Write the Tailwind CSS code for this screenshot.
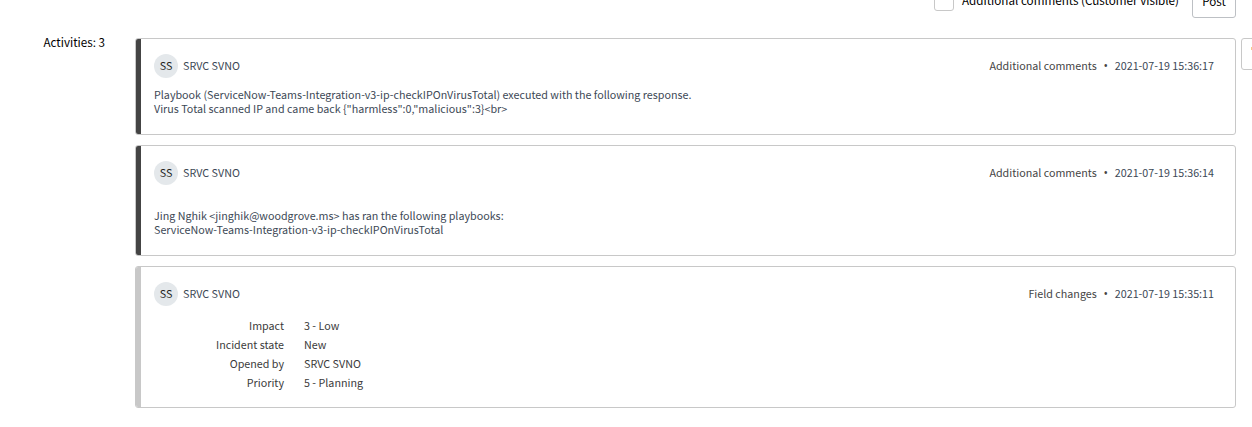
<!DOCTYPE html>
<html lang="en">
<head>
<meta charset="utf-8">
<title>Activities</title>
<script src="https://cdn.jsdelivr.net/npm/@tailwindcss/browser@4"></script>
</head>
<body class="h-[427px] w-[1252px] overflow-hidden bg-white font-['Noto_Sans_CJK_SC','Noto_Sans',sans-serif] text-[10.74px] leading-[14px] whitespace-nowrap text-[#3c4855]">
<header class="flex h-[38px] items-start justify-end overflow-hidden pr-4 text-[11.65px] text-black">
  <span class="-mt-2.5 h-[21px] w-5 rounded-[3px] border border-[#c8c8c8] bg-white"></span>
  <span class="-mt-[9px] ml-2 w-[218px] leading-[18px]">Additional comments (Customer visible)</span>
  <button class="-mt-4 ml-3 flex h-[34px] w-11 items-center justify-center rounded-[3px] border border-[#bdc0c4] leading-[18px]">Post</button>
</header>
<main class="flex items-start">
  <div class="w-[135px] shrink-0 pr-[30px] text-right text-[11.65px] leading-[7px] text-black">Activities: 3</div>
  <section class="flex w-[1101px] shrink-0 flex-col gap-2.5">
    <article class="flex h-[97px] overflow-hidden rounded-[3px] border border-[#c8c8c8]">
      <div class="w-[5px] bg-[#444]"></div>
      <div class="flex-1 pt-[15px] pr-[21px] pl-[13px]">
        <div class="flex h-6 items-center">
          <span class="flex size-6 items-center justify-center rounded-full bg-[#e4e8eb] text-[#222]">SS</span>
          <span class="ml-[5px]">SRVC SVNO</span>
          <span class="ml-auto text-[#444]">Additional comments</span>
          <span class="w-[18px] text-center font-['Open_Sans'] text-[12px] text-[#444]">•</span>
          <span>2021-07-19 15:36:17</span>
        </div>
        <p class="mt-[10px]">Playbook (ServiceNow-Teams-Integration-v3-ip-checkIPOnVirusTotal) executed with the following response.</p>
        <p>Virus Total scanned IP and came back {"harmless":0,"malicious":3}&lt;br&gt;</p>
      </div>
    </article>
    <article class="flex h-[111px] overflow-hidden rounded-[3px] border border-[#c8c8c8]">
      <div class="w-[5px] bg-[#444]"></div>
      <div class="flex-1 pt-[15px] pr-[21px] pl-[13px]">
        <div class="flex h-6 items-center">
          <span class="flex size-6 items-center justify-center rounded-full bg-[#e4e8eb] text-[#222]">SS</span>
          <span class="ml-[5px]">SRVC SVNO</span>
          <span class="ml-auto text-[#444]">Additional comments</span>
          <span class="w-[18px] text-center font-['Open_Sans'] text-[12px] text-[#444]">•</span>
          <span>2021-07-19 15:36:14</span>
        </div>
        <p class="mt-6">Jing Nghik &lt;jinghik@woodgrove.ms&gt; has ran the following playbooks:</p>
        <p>ServiceNow-Teams-Integration-v3-ip-checkIPOnVirusTotal</p>
      </div>
    </article>
    <article class="flex h-[142px] overflow-hidden rounded-[3px] border border-[#c8c8c8]">
      <div class="w-[5px] bg-[#c8c8c8]"></div>
      <div class="flex-1 pt-[15px] pr-[21px] pl-[13px]">
        <div class="flex h-6 items-center">
          <span class="flex size-6 items-center justify-center rounded-full bg-[#e4e8eb] text-[#222]">SS</span>
          <span class="ml-[5px]">SRVC SVNO</span>
          <span class="ml-auto text-[#444]">Field changes</span>
          <span class="w-[18px] text-center font-['Open_Sans'] text-[12px] text-[#444]">•</span>
          <span>2021-07-19 15:35:11</span>
        </div>
        <dl class="mt-[10px] grid grid-cols-[130px_1fr] gap-x-5 leading-[19px] text-[#3a3a3a]">
          <dt class="text-right">Impact</dt><dd>3 - Low</dd>
          <dt class="text-right">Incident state</dt><dd>New</dd>
          <dt class="text-right">Opened by</dt><dd>SRVC SVNO</dd>
          <dt class="text-right">Priority</dt><dd>5 - Planning</dd>
        </dl>
      </div>
    </article>
  </section>
  <div class="ml-[5px] flex h-8 w-8 shrink-0 rounded-[3px] border border-[#c8c8c8]">
    <span class="mt-[8px] ml-[9px] h-[3px] w-3 shrink-0 bg-[#f6c98b]"></span>
  </div>
</main>
</body>
</html>
